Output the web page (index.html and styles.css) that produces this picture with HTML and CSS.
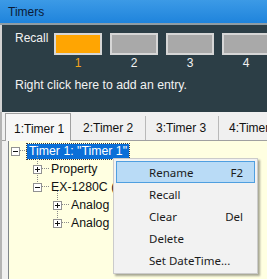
FILE: index.html
```html
<!DOCTYPE html>
<html lang="en">
<head>
  <meta charset="UTF-8">
  <title>Timers</title>
  <link rel="stylesheet" href="styles.css">
</head>
<body>
  <div class="window">
    <div class="titlebar">Timers</div>
    <div class="recall-panel">
      <div class="recall-row">
        <span class="recall-label">Recall</span>
        <div class="slot active">
          <div class="slot-btn"></div>
          <span class="slot-num">1</span>
        </div>
        <div class="slot">
          <div class="slot-btn"></div>
          <span class="slot-num">2</span>
        </div>
        <div class="slot">
          <div class="slot-btn"></div>
          <span class="slot-num">3</span>
        </div>
        <div class="slot">
          <div class="slot-btn"></div>
          <span class="slot-num">4</span>
        </div>
      </div>
      <p class="hint">Right click here to add an entry.</p>
    </div>
    <div class="tab-area">
      <ul class="tabs">
        <li class="tab selected">1:Timer 1</li>
        <li class="tab">2:Timer 2</li>
        <li class="tab">3:Timer 3</li>
        <li class="tab">4:Timer 4</li>
      </ul>
      <div class="tree">
        <div class="node lvl0">
          <span class="toggle minus"></span><span class="dots"></span>
          <span class="label selected">Timer 1: "Timer 1"</span>
        </div>
        <div class="node lvl1">
          <span class="toggle plus up"></span><span class="dots"></span>
          <span class="label">Property</span>
        </div>
        <div class="node lvl1">
          <span class="toggle minus up"></span><span class="dots"></span>
          <span class="label">EX-1280C (192.168.1.100)</span>
        </div>
        <div class="node lvl2">
          <span class="toggle plus up"></span><span class="dots"></span>
          <span class="label">Analog Input 1-8</span>
        </div>
        <div class="node lvl2">
          <span class="toggle plus up"></span><span class="dots"></span>
          <span class="label">Analog Input 9-16</span>
        </div>

        <!-- context menu over the tree -->
        <ul class="context-menu">
          <li class="menu-item hover"><span>Rename</span><span class="key">F2</span></li>
          <li class="menu-item"><span>Recall</span></li>
          <li class="menu-item"><span>Clear</span><span class="key">Del</span></li>
          <li class="menu-item"><span>Delete</span></li>
          <li class="menu-item"><span>Set DateTime...</span></li>
        </ul>
      </div>
    </div>
  </div>
</body>
</html>
```

FILE: styles.css
```css
/* Reset */
body, p, ul, li {
  margin: 0;
  padding: 0;
}

body {
  font-family: "Liberation Sans", Arial, sans-serif;
  font-size: 12px;
  width: 267px;
  height: 279px;
  overflow: hidden;
  background-color: #f0f0f0;
}

.window {
  display: flex;
  flex-direction: column;
  height: 279px;
}

/* Title bar */
.titlebar {
  height: 23px;
  line-height: 25px;
  padding-left: 8px;
  color: #0b1b36;
  background: linear-gradient(#3c9ae6, #1f84dc);
  border-bottom: 2px solid #8f9ca3;
}

/* Recall panel */
.recall-panel {
  height: 87px;
  background-color: #2c3e46;
  border-left: 2px solid #d2d2d2;
  color: #f2f2f2;
  padding: 6px 0 0 13px;
  box-sizing: border-box;
}

.recall-row {
  display: flex;
  gap: 8px;
}

.recall-label {
  width: 31px;
  line-height: 14px;
}

.slot {
  display: flex;
  flex-direction: column;
  align-items: center;
  flex-shrink: 0;
}

.slot-btn {
  width: 44px;
  height: 18px;
  margin-top: 2px;
  background-color: #a9a9a9;
  border: 2px solid #d6d6d6;
}

.slot.active .slot-btn {
  background-color: #ffa502;
}

.slot-num {
  margin-top: 1px;
  line-height: 14px;
  font-size: 12px;
}

.slot.active .slot-num {
  color: #f0a21c;
}

.hint {
  margin-top: 8px;
  line-height: 14px;
  font-size: 12.3px;
}

/* Tabs */
.tab-area {
  flex-grow: 1;
  display: flex;
  flex-direction: column;
  border-left: 2px solid #b4b4b4;
  background-color: #f0f0f0;
  padding-top: 1px;
}

.tabs {
  display: flex;
  list-style: none;
  height: 27px;
  padding-left: 3px;
  border-bottom: 1px solid #a0a0a0;
  align-items: flex-end;
}

.tab {
  flex-shrink: 0;
  width: 73px;
  height: 24px;
  line-height: 24px;
  box-sizing: border-box;
  padding-left: 10px;
  border-right: 1px solid #b9b9b9;
  color: #111;
}

.tab.selected {
  width: 66px;
  height: 28px;
  line-height: 30px;
  padding-left: 8px;
  margin-bottom: -1px;
  margin-right: 2px;
  border: 1px solid #a0a0a0;
  border-bottom: none;
  background-color: #f7f7f7;
}

/* Tree */
.tree {
  position: relative;
  flex-grow: 1;
  margin-left: 6px;
  border-left: 1px solid #7f858a;
  background-color: #ffffe1;
  padding-top: 1px;
  color: #111;
}

.node {
  display: flex;
  align-items: center;
  height: 18px;
  white-space: nowrap;
}

.node.lvl0 { padding-left: 2px; }
.node.lvl1 { padding-left: 24px; }
.node.lvl2 { padding-left: 44px; }

.toggle {
  position: relative;
  width: 9px;
  height: 9px;
  box-sizing: border-box;
  border: 1px solid #919191;
  background-color: #fff;
  flex-shrink: 0;
}

.toggle::after {
  content: "";
  position: absolute;
  left: 1px;
  top: 3px;
  width: 5px;
  height: 1px;
  background-color: #111;
}

.toggle.plus::before {
  content: "";
  position: absolute;
  left: 3px;
  top: 1px;
  width: 1px;
  height: 5px;
  background-color: #111;
}

/* dotted line up to the previous row */
.toggle.up {
  box-shadow: none;
}

.node.lvl1 .toggle.up,
.node.lvl2 .toggle.up {
  background-image: none;
}

.node.lvl1::before,
.node.lvl2::before {
  content: "";
}

.dots {
  width: 7px;
  height: 1px;
  flex-shrink: 0;
  border-top: 1px dotted #8a8a8a;
}

.label {
  padding: 0 2px;
  line-height: 15px;
  font-size: 12.3px;
}

.label.selected {
  background-color: #0a6fd8;
  color: #fff;
  outline: 1px dotted #3a3a3a;
}

.tree .node:nth-child(2) .toggle.up,
.tree .node:nth-child(3) .toggle.up,
.tree .node:nth-child(4) .toggle.up,
.tree .node:nth-child(5) .toggle.up {
  overflow: visible;
}

.toggle.up .line,
.node .toggle.up {
  border-color: #919191;
}

/* vertical connector drawn over the previous row */
.node.lvl1 .toggle.up,
.node.lvl2 .toggle.up {
  outline: none;
}

.node.lvl1 .dots,
.node.lvl2 .dots {
  position: relative;
}

.node.lvl1 .dots::before,
.node.lvl2 .dots::before {
  content: "";
  position: absolute;
  left: -5px;
  top: -14px;
  height: 9px;
  border-left: 1px dotted #8a8a8a;
}

/* Context menu */
.context-menu {
  position: absolute;
  left: 104px;
  top: 17px;
  width: 145px;
  list-style: none;
  padding: 2px 2px;
  box-sizing: border-box;
  background-color: #f2f2f2;
  border: 1px solid #cbcbcb;
  box-shadow: 2px 2px 2px rgba(0, 0, 0, 0.35);
  font-family: "Noto Sans", "Open Sans", sans-serif;
  font-size: 11.5px;
  color: #1b1b1b;
}

.menu-item {
  display: flex;
  justify-content: space-between;
  height: 22px;
  line-height: 21px;
  padding: 0 11px 0 32px;
  box-sizing: border-box;
  border: 1px solid transparent;
}

.menu-item.hover {
  background-color: #b9dbf6;
  border-color: #4f9fe0;
}
```
